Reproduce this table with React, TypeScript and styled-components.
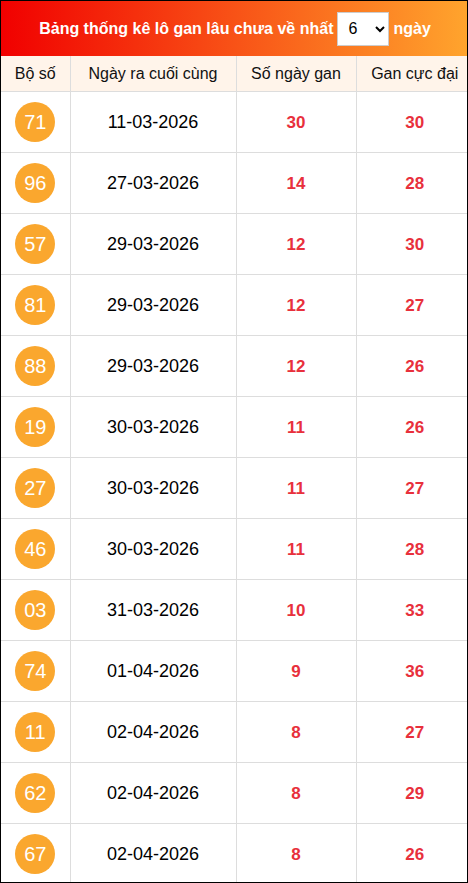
import styled, { createGlobalStyle } from "styled-components";

const rows = [
  { so: "71", ngay: "11-03-2026", gan: 30, max: 30 },
  { so: "96", ngay: "27-03-2026", gan: 14, max: 28 },
  { so: "57", ngay: "29-03-2026", gan: 12, max: 30 },
  { so: "81", ngay: "29-03-2026", gan: 12, max: 27 },
  { so: "88", ngay: "29-03-2026", gan: 12, max: 26 },
  { so: "19", ngay: "30-03-2026", gan: 11, max: 26 },
  { so: "27", ngay: "30-03-2026", gan: 11, max: 27 },
  { so: "46", ngay: "30-03-2026", gan: 11, max: 28 },
  { so: "03", ngay: "31-03-2026", gan: 10, max: 33 },
  { so: "74", ngay: "01-04-2026", gan: 9, max: 36 },
  { so: "11", ngay: "02-04-2026", gan: 8, max: 27 },
  { so: "62", ngay: "02-04-2026", gan: 8, max: 29 },
  { so: "67", ngay: "02-04-2026", gan: 8, max: 26 },
];

const GlobalStyle = createGlobalStyle`
  body {
    margin: 0;
    background: #fff;
    font-family: "Liberation Sans", Arial, sans-serif;
  }
`;

const App = () => {
  return (
    <>
      <GlobalStyle />
      <Wrapper>
        <TitleBar>
          <Title>Bảng thống kê lô gan lâu chưa về nhất</Title>
          <DaySelect defaultValue="6">
            <option value="2">2</option>
            <option value="3">3</option>
            <option value="4">4</option>
            <option value="5">5</option>
            <option value="6">6</option>
            <option value="7">7</option>
          </DaySelect>
          <Title>ngày</Title>
        </TitleBar>
        <Table>
          <colgroup>
            <col style={{ width: 69 }} />
            <col style={{ width: 166 }} />
            <col style={{ width: 120 }} />
            <col />
          </colgroup>
          <thead>
            <tr>
              <HeadCell>Bộ số</HeadCell>
              <HeadCell>Ngày ra cuối cùng</HeadCell>
              <HeadCell>Số ngày gan</HeadCell>
              <HeadCell>Gan cực đại</HeadCell>
            </tr>
          </thead>
          <tbody>
            {rows.map((r) => (
              <tr key={r.so}>
                <Cell>
                  <Ball>{r.so}</Ball>
                </Cell>
                <Cell>{r.ngay}</Cell>
                <Cell>
                  <Red>{r.gan}</Red>
                </Cell>
                <Cell>
                  <Red>{r.max}</Red>
                </Cell>
              </tr>
            ))}
          </tbody>
        </Table>
      </Wrapper>
    </>
  );
};

const Wrapper = styled.div`
  width: 468px;
  height: 883px;
  box-sizing: border-box;
  border: 1px solid #000;
  overflow: hidden;
`;

const TitleBar = styled.div`
  height: 55px;
  display: flex;
  align-items: center;
  justify-content: center;
  gap: 4px;
  padding-left: 2px;
  background: linear-gradient(to right, #f10000, #ffa42d);
`;

const Title = styled.span`
  color: #fff;
  font-weight: bold;
  font-size: 16px;
`;

const DaySelect = styled.select`
  width: 52px;
  height: 34px;
  padding: 0 6px;
  font-family: "Liberation Sans", Arial, sans-serif;
  font-size: 16px;
  color: #000;
  background: #fff;
  border: 1px solid #ccc;
  border-radius: 0;
`;

/* the table runs a few px past the frame on the right and is clipped */
const Table = styled.table`
  width: 472px;
  border-collapse: collapse;
  table-layout: fixed;
`;

const HeadCell = styled.th`
  height: 35px;
  padding: 0;
  background: #fff4ea;
  color: #111;
  font-weight: normal;
  font-size: 16px;
  text-align: center;
  border-bottom: 1px solid #ddd;
  border-left: 1px solid #ddd;

  &:first-child {
    border-left: none;
  }
`;

const Cell = styled.td`
  height: 60px;
  padding: 0;
  text-align: center;
  font-size: 18px;
  color: #000;
  border-bottom: 1px solid #ddd;
  border-left: 1px solid #ddd;

  &:first-child {
    border-left: none;
  }
`;

const Ball = styled.span`
  display: inline-flex;
  align-items: center;
  justify-content: center;
  width: 40px;
  height: 40px;
  border-radius: 50%;
  background: #faa72e;
  color: #fff;
  font-size: 20px;
  vertical-align: middle;
`;

const Red = styled.span`
  color: #e8303c;
  font-weight: bold;
  font-size: 17px;
`;

export default App;
